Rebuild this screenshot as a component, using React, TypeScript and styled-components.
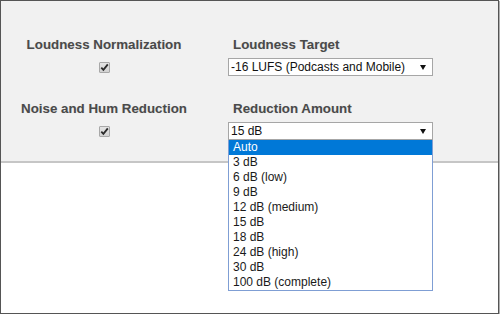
import React from "react";
import styled, { createGlobalStyle } from "styled-components";

const GlobalStyle = createGlobalStyle`
  body {
    margin: 0;
    background: #ffffff;
    font-family: "Liberation Sans", Arial, sans-serif;
  }
`;

const reductionOptions = [
  "Auto",
  "3 dB",
  "6 dB (low)",
  "9 dB",
  "12 dB (medium)",
  "15 dB",
  "18 dB",
  "24 dB (high)",
  "30 dB",
  "100 dB (complete)",
];

export default function App() {
  return (
    <>
      <GlobalStyle />
      <Frame>
        <Panel>
          <Row>
            <ToggleCell>
              <Label>Loudness Normalization</Label>
              <ControlLine>
                <CheckBox />
              </ControlLine>
            </ToggleCell>
            <SelectCell>
              <Label $indent>Loudness Target</Label>
              <SelectBox>
                <span>-16 LUFS (Podcasts and Mobile)</span>
                <Arrow />
              </SelectBox>
            </SelectCell>
          </Row>
          <Row>
            <ToggleCell>
              <Label>Noise and Hum Reduction</Label>
              <ControlLine>
                <CheckBox />
              </ControlLine>
            </ToggleCell>
            <SelectCell>
              <Label $indent>Reduction Amount</Label>
              <SelectBox>
                <span>15 dB</span>
                <Arrow />
                <OptionList>
                  {reductionOptions.map((opt, i) => (
                    <OptionItem key={opt} $active={i === 0}>
                      {opt}
                    </OptionItem>
                  ))}
                </OptionList>
              </SelectBox>
            </SelectCell>
          </Row>
        </Panel>
      </Frame>
    </>
  );
}

function CheckBox() {
  return (
    <CheckSquare>
      <svg width="9" height="9" viewBox="0 0 9 9">
        <path
          d="M1.3 4.6 L3.4 6.9 L7.8 1.4"
          fill="none"
          stroke="#2b2b2b"
          strokeWidth="1.8"
        />
      </svg>
    </CheckSquare>
  );
}

function Arrow() {
  return (
    <ArrowIcon width="6" height="5" viewBox="0 0 6 5">
      <path d="M0 0 L6 0 L3 5 Z" fill="#111" />
    </ArrowIcon>
  );
}

const Frame = styled.div`
  box-sizing: border-box;
  width: 499px;
  height: 314px;
  border: 1px solid #555;
  box-shadow: 1px 1px 0 #b0b0b0;
  background: #fff;
`;

const Panel = styled.div`
  background: #f1f1f1;
  border-bottom: 2px solid #c6c6c6;
  padding: 36px 0 21px;
  display: flex;
  flex-direction: column;
  gap: 25px;
`;

const Row = styled.div`
  display: grid;
  grid-template-columns: 206px 205px;
  column-gap: 21px;
`;

const ToggleCell = styled.div`
  display: flex;
  flex-direction: column;
  align-items: center;
  gap: 5px;
`;

const SelectCell = styled.div`
  display: flex;
  flex-direction: column;
  gap: 5px;
`;

const Label = styled.div<{ $indent?: boolean }>`
  font-size: 13.33px;
  font-weight: bold;
  line-height: 16px;
  color: #4a4a4a;
  text-shadow: 0 0 1px rgba(0, 0, 0, 0.12);
  padding-left: ${(p) => (p.$indent ? "5px" : "0")};
  white-space: nowrap;
`;

const ControlLine = styled.div`
  height: 18px;
  display: flex;
  align-items: center;
`;

const CheckSquare = styled.span`
  box-sizing: border-box;
  width: 11px;
  height: 11px;
  border: 1px solid #a8a8a8;
  border-radius: 1px;
  background: linear-gradient(#e4e4e4, #d2d2d2);
  display: flex;
  align-items: center;
  justify-content: center;
`;

const SelectBox = styled.div`
  position: relative;
  box-sizing: border-box;
  width: 205px;
  height: 18px;
  border: 1px solid #a6a6a6;
  background: #fff;
  padding: 0 6px 0 2px;
  display: flex;
  align-items: center;
  justify-content: space-between;
  font-size: 12px;
  line-height: 16px;
  color: #111;
`;

const ArrowIcon = styled.svg`
  flex: none;
`;

const OptionList = styled.div`
  position: absolute;
  top: 17px;
  left: -1px;
  box-sizing: border-box;
  width: 205px;
  border: 1px solid #7f9ed4;
  border-top: none;
  background: #fff;
  display: flex;
  flex-direction: column;
  z-index: 2;
`;

const OptionItem = styled.div<{ $active?: boolean }>`
  height: 15px;
  line-height: 15px;
  padding-left: 4px;
  font-size: 12px;
  color: ${(p) => (p.$active ? "#fff" : "#1a1a1a")};
  background: ${(p) => (p.$active ? "#0078d7" : "transparent")};
  white-space: nowrap;
`;
